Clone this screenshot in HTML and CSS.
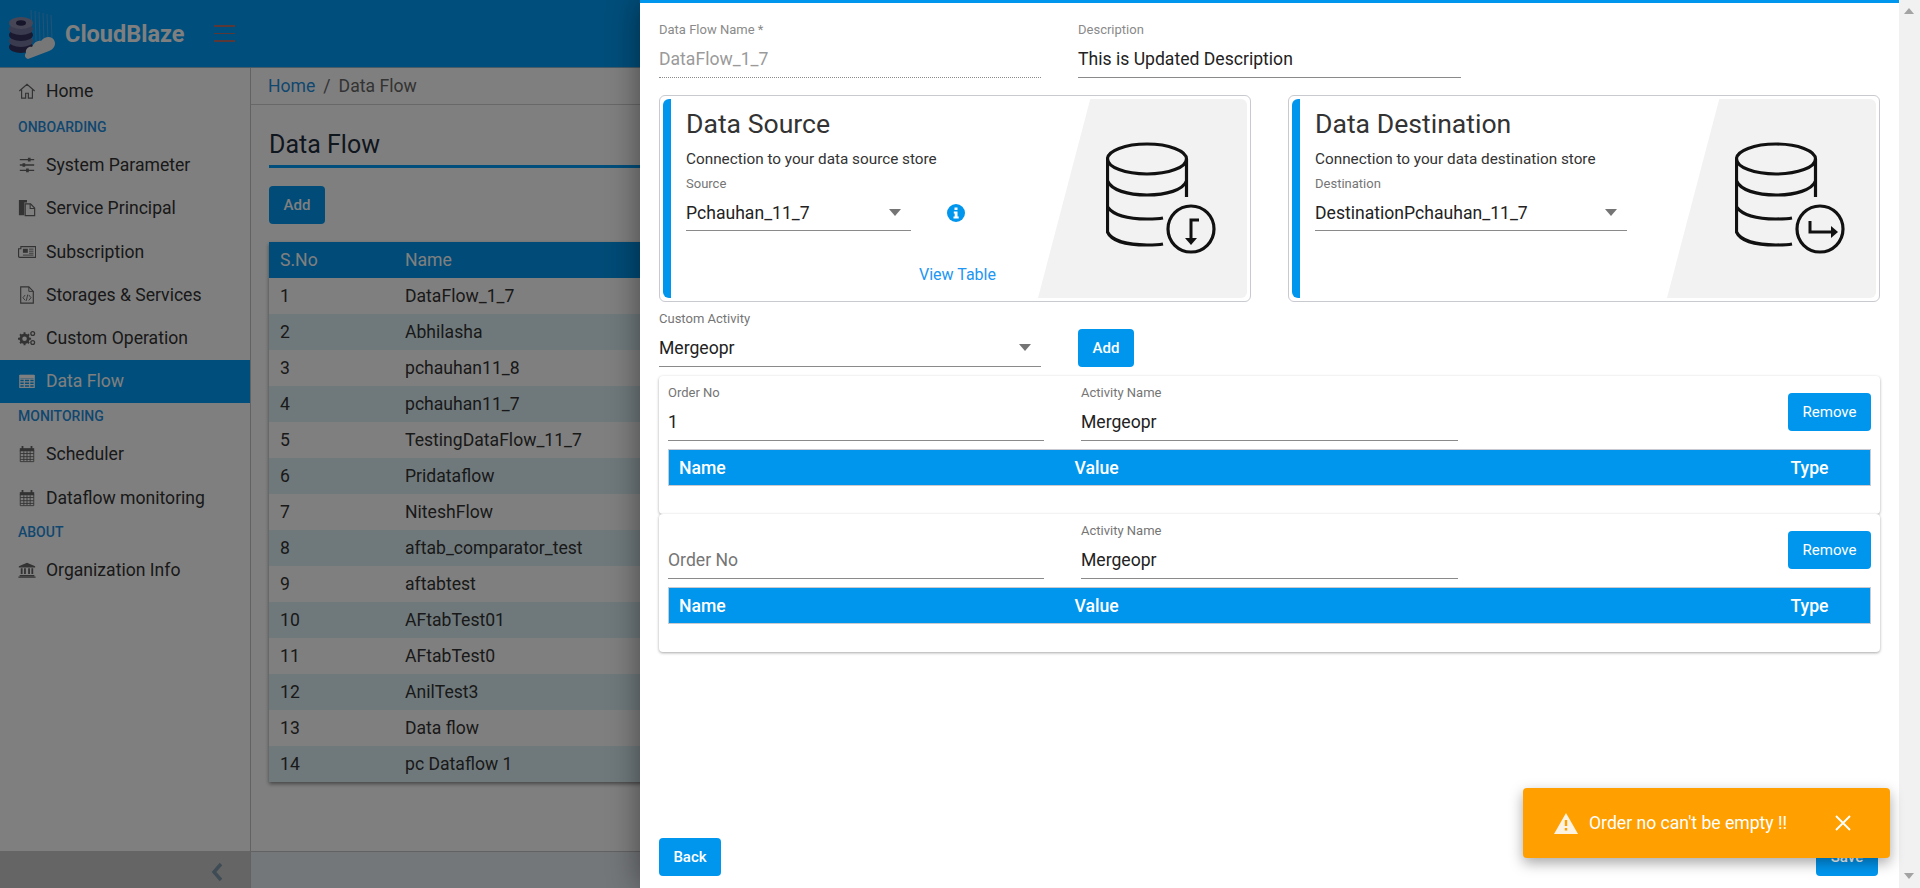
FILE: index.html
```html
<!DOCTYPE html>
<html lang="en">
<head>
  <meta charset="UTF-8" />
  <title>CloudBlaze - Data Flow</title>
  <link rel="stylesheet" href="styles.css">
</head>
<body>

  <svg class="sprite" xmlns="http://www.w3.org/2000/svg">
    <symbol id="db-base" viewBox="0 0 110 113">
      <g fill="none" stroke="#111" stroke-width="3.200">
        <ellipse cx="41" cy="18" rx="39.500" ry="15"/>
        <path d="M1.500 18v73c4 9 20 13 39.500 13 6 0 11 0 16-1"/>
        <path d="M80.500 18v38"/>
        <path d="M1.500 40c4 9 20 14 39.500 14s36-5 39.500-14"/>
        <path d="M1.500 66c6 8 20 12 39.500 12 6 0 11 0 16-1"/>
        <circle cx="85" cy="88" r="23"/>
      </g>
    </symbol>
    <symbol id="i-home" viewBox="0 0 20 20"><path d="M1.500 10 10 2.500l8.500 7.500M4 8.500V18h4.500v-5.500h3V18H16V8.500" fill="none" stroke="currentColor" stroke-width="1.300"/></symbol>
    <symbol id="i-sliders" viewBox="0 0 20 20"><path d="M2 4h16M2 10h16M2 16h16" stroke="currentColor" stroke-width="1.500"/><path d="M11 2h3v4h-3zM5 8h3v4H5zM9 14h3v4H9z" fill="currentColor"/></symbol>
    <symbol id="i-copy" viewBox="0 0 20 20"><path d="M1 1h9v3H7v14H1z" fill="currentColor"/><path d="M8 5.500h6l4.500 4.500v8.500H8z" fill="none" stroke="currentColor" stroke-width="1.300"/><path d="M13.500 5.500V10.500h5" fill="none" stroke="currentColor" stroke-width="1.200"/></symbol>
    <symbol id="i-news" viewBox="0 0 22 20"><path d="M3.500 3.500h18v13H2a1.300 1.300 0 0 1-1.300-1.300V6h2.800z" fill="none" stroke="currentColor" stroke-width="1.400"/><path d="M6 6h6v5H6z" fill="currentColor"/><path d="M13.500 6.500H19M13.500 9H19M13.500 11.500H19M6 13.800h13" stroke="currentColor" stroke-width="1.100"/></symbol>
    <symbol id="i-code" viewBox="0 0 20 20"><path d="M3 1h9l5 5v13H3z" fill="none" stroke="currentColor" stroke-width="1.300"/><path d="M12 1v5h5M8 10l-2.500 3L8 16M12 10l2.500 3-2.500 3M10.800 9.500l-1.600 7" fill="none" stroke="currentColor" stroke-width="1"/></symbol>
    <symbol id="i-cogs" viewBox="0 0 22 20"><circle cx="8" cy="11" r="4.500" fill="none" stroke="currentColor" stroke-width="3.400"/><path d="M8 3v3M8 16v3M0 11h3M13 11h3M2.500 5.500l2 2M11.500 14.500l2 2M2.500 16.500l2-2M11.500 7.500l2-2" stroke="currentColor" stroke-width="2.400"/><circle cx="18" cy="4.500" r="2.300" fill="none" stroke="currentColor" stroke-width="1.600"/><circle cx="18" cy="15.500" r="2.300" fill="none" stroke="currentColor" stroke-width="1.600"/></symbol>
    <symbol id="i-table" viewBox="0 0 20 20"><path d="M2 4h16v13H2zM2 8h16M2 11h16M2 14h16M7 8v9M13 8v9" fill="none" stroke="currentColor" stroke-width="1.300"/><path d="M2 3h16v4H2z" fill="currentColor"/></symbol>
    <symbol id="i-cal" viewBox="0 0 20 20"><path d="M2 3.500h16V7H2z" fill="currentColor"/><path d="M5 1v4M15 1v4" stroke="currentColor" stroke-width="2"/><path d="M2.500 6v12.500h15V6M2.500 9.500h15M2.500 13h15M2.500 16h15M6.500 7v11M10 7v11M13.500 7v11" fill="none" stroke="currentColor" stroke-width="1"/></symbol>
    <symbol id="i-bank" viewBox="0 0 22 20"><path d="M11 1 1 5.500V7h20V5.500zM2 16h18v1.500H2zM0.500 18h21v1.500H.5z" fill="currentColor"/><path d="M4.500 8v7M8.500 8v7M13.500 8v7M17.500 8v7" stroke="currentColor" stroke-width="2.200"/></symbol>
  </svg>

  <div class="page">
    <header class="topbar">
      <svg class="logo" viewBox="0 0 50 52" aria-hidden="true">
        <g stroke="#a7b4dd" stroke-width=".7" opacity=".6"><path d="M23 1l1 30M27 2l1 30M31 3l1 30M35 4l1 28M39 5l1 26M43 6l1 24"/></g>
        <ellipse cx="13" cy="38" rx="12" ry="6" fill="#34325f"/>
        <ellipse cx="13" cy="32" rx="12" ry="6" fill="#77769f"/>
        <ellipse cx="13" cy="26" rx="12" ry="6" fill="#34325f"/>
        <ellipse cx="13" cy="20" rx="12" ry="6" fill="#77769f"/>
        <ellipse cx="13" cy="14" rx="12" ry="6" fill="#8c8cae"/>
        <ellipse cx="13" cy="14" rx="5" ry="2.800" fill="#2c2a55"/>
        <path d="M20 50c-3-1-4-4-2-6-1-4 3-7 6-6 2-5 6-7 9-6 3-4 8-5 11-3 3 2 4 6 2 9-1 2-3 3-5 4z" fill="#efefef"/>
      </svg>
      <span class="brand">CloudBlaze</span>
      <span class="burger"><i></i><i></i><i></i></span>
    </header>

    <div class="shell">
      <aside class="sidebar">
        <nav class="menu">
          <a class="menu-item"><svg><use href="#i-home"/></svg>Home</a>
          <div class="menu-label">ONBOARDING</div>
          <a class="menu-item"><svg><use href="#i-sliders"/></svg>System Parameter</a>
          <a class="menu-item"><svg><use href="#i-copy"/></svg>Service Principal</a>
          <a class="menu-item"><svg><use href="#i-news"/></svg>Subscription</a>
          <a class="menu-item"><svg><use href="#i-code"/></svg>Storages &amp; Services</a>
          <a class="menu-item"><svg><use href="#i-cogs"/></svg>Custom Operation</a>
          <a class="menu-item active"><svg><use href="#i-table"/></svg>Data Flow</a>
          <div class="menu-label">MONITORING</div>
          <a class="menu-item"><svg><use href="#i-cal"/></svg>Scheduler</a>
          <a class="menu-item"><svg><use href="#i-cal"/></svg>Dataflow monitoring</a>
          <div class="menu-label">ABOUT</div>
          <a class="menu-item"><svg><use href="#i-bank"/></svg>Organization Info</a>
        </nav>
        <div class="collapse">
          <svg width="14" height="20" viewBox="0 0 14 20"><path d="M11 2 4 10l7 8" fill="none" stroke="#7f99aa" stroke-width="3.500"/></svg>
        </div>
      </aside>

      <main class="content">
        <div class="crumbs"><a>Home</a><span class="sep">/</span><span>Data Flow</span></div>
        <div class="content-body">
          <h1 class="page-title">Data Flow</h1>
          <button class="btn">Add</button>
          <table class="flow-table">
            <thead><tr><th class="col-no">S.No</th><th>Name</th></tr></thead>
            <tbody>
              <tr><td>1</td><td>DataFlow_1_7</td></tr>
              <tr><td>2</td><td>Abhilasha</td></tr>
              <tr><td>3</td><td>pchauhan11_8</td></tr>
              <tr><td>4</td><td>pchauhan11_7</td></tr>
              <tr><td>5</td><td>TestingDataFlow_11_7</td></tr>
              <tr><td>6</td><td>Pridataflow</td></tr>
              <tr><td>7</td><td>NiteshFlow</td></tr>
              <tr><td>8</td><td>aftab_comparator_test</td></tr>
              <tr><td>9</td><td>aftabtest</td></tr>
              <tr><td>10</td><td>AFtabTest01</td></tr>
              <tr><td>11</td><td>AFtabTest0</td></tr>
              <tr><td>12</td><td>AnilTest3</td></tr>
              <tr><td>13</td><td>Data flow</td></tr>
              <tr><td>14</td><td>pc Dataflow 1</td></tr>
            </tbody>
          </table>
        </div>
        <div class="content-foot"></div>
      </main>
    </div>
  </div>

  <div class="backdrop"></div>

  <section class="drawer">
    <div class="drawer-main">
      <div class="drawer-body">
        <div class="name-row">
          <div class="field w-382">
            <label>Data Flow Name *</label>
            <div class="value disabled">DataFlow_1_7</div>
          </div>
          <div class="field w-383">
            <label>Description</label>
            <div class="value">This is Updated Description</div>
          </div>
        </div>

        <div class="store-row">
          <div class="store">
            <div class="store-body">
              <h2>Data Source</h2>
              <p>Connection to your data source store</p>
              <div class="source-row">
                <div class="field w-225">
                  <label>Source</label>
                  <div class="value select">Pchauhan_11_7</div>
                </div>
                <svg class="info" width="18" height="18" viewBox="0 0 18 18"><circle cx="9" cy="9" r="9" fill="#0096ee"/><path d="M7.500 3.500h3v2.500h-3zM6.800 7.500h3.700v5h1.200v2H6.500v-2h1.200v-3H6.800z" fill="#fff"/></svg>
              </div>
              <a class="view-link">View Table</a>
            </div>
            <div class="store-art">
              <svg class="db" viewBox="0 0 110 113">
                <use href="#db-base"/>
                <path d="M93 79H85V101" fill="none" stroke="#111" stroke-width="3"/>
                <path d="M79 97h12l-6 7z" fill="#111"/>
              </svg>
            </div>
          </div>

          <div class="store">
            <div class="store-body">
              <h2>Data Destination</h2>
              <p>Connection to your data destination store</p>
              <div class="field w-312">
                <label>Destination</label>
                <div class="value select">DestinationPchauhan_11_7</div>
              </div>
            </div>
            <div class="store-art">
              <svg class="db" viewBox="0 0 110 113">
                <use href="#db-base"/>
                <path d="M75 80V91H98" fill="none" stroke="#111" stroke-width="3"/>
                <path d="M96 85l7 6-7 6z" fill="#111"/>
              </svg>
            </div>
          </div>
        </div>

        <div class="custom-row">
          <div class="field w-382">
            <label>Custom Activity</label>
            <div class="value select">Mergeopr</div>
          </div>
          <button class="btn">Add</button>
        </div>

        <div class="activity">
          <div class="activity-top">
            <div class="field w-376">
              <label>Order No</label>
              <div class="value">1</div>
            </div>
            <div class="field w-377">
              <label>Activity Name</label>
              <div class="value">Mergeopr</div>
            </div>
            <button class="btn btn-remove">Remove</button>
          </div>
          <table class="param-table">
            <thead><tr><th class="col-a">Name</th><th class="col-b">Value</th><th>Type</th></tr></thead>
          </table>
        </div>

        <div class="activity">
          <div class="activity-top">
            <div class="field w-376">
              <label>&nbsp;</label>
              <div class="value empty">Order No</div>
            </div>
            <div class="field w-377">
              <label>Activity Name</label>
              <div class="value">Mergeopr</div>
            </div>
            <button class="btn btn-remove">Remove</button>
          </div>
          <table class="param-table">
            <thead><tr><th class="col-a">Name</th><th class="col-b">Value</th><th>Type</th></tr></thead>
          </table>
        </div>
      </div>

      <div class="drawer-foot">
        <button class="btn btn-back">Back</button>
        <button class="btn btn-save">Save</button>
      </div>
    </div>

    <div class="scrollbar"><span class="arrow-up"></span><span class="arrow-down"></span></div>
  </section>

  <div class="toast">
    <svg width="24" height="21" viewBox="0 0 24 21"><path d="M12 0 24 21H0z" fill="#fdf3e3"/><path d="M10.800 7h2.400v6h-2.400zM10.800 15h2.400v2.500h-2.400z" fill="#ffa000"/></svg>
    <span class="toast-text">Order no can't be empty !!</span>
    <svg class="toast-close" width="16" height="16" viewBox="0 0 16 16"><path d="M1 1l14 14M15 1 1 15" stroke="#fff" stroke-width="1.800"/></svg>
  </div>

</body>
</html>
```

FILE: styles.css
```css
* {
  box-sizing: border-box;
}

html, body {
  height: 100%;
}

body {
  margin: 0;
  font-family: Roboto, 'Liberation Sans', sans-serif;
  color: #333;
  overflow: hidden;
  background-color: #fff;
}

.sprite {
  display: none;
}

.page {
  display: flex;
  flex-direction: column;
  height: 888px;
}

.topbar {
  display: flex;
  align-items: center;
  height: 68px;
  padding-left: 8px;
  background-color: #009df7;
  flex-shrink: 0;
  border-bottom: 1px solid #8fb8d0;
}

.logo {
  width: 50px;
  height: 52px;
  margin-top: 2px;
}

.brand {
  margin-left: 7px;
  font-size: 23.5px;
  font-weight: 700;
  color: #fff;
}

.burger {
  display: flex;
  flex-direction: column;
  gap: 6px;
  margin-left: 29px;
}

.burger i {
  display: block;
  width: 21px;
  height: 1.5px;
  background-color: #b5716f;
}

.shell {
  display: flex;
  flex: 1;
  min-height: 0;
}

.sidebar {
  display: flex;
  flex-direction: column;
  width: 250px;
  flex-shrink: 0;
  background-color: #fff;
}

.menu {
  flex: 1;
  padding-top: 1px;
}

.menu-item {
  display: flex;
  align-items: center;
  height: 43.3px;
  padding-left: 18px;
  font-size: 17.6px;
  color: #333;
}

.menu-item:first-child {
  margin-bottom: 1.5px;
}

.menu-item svg {
  width: 18px;
  height: 18px;
  margin-right: 10px;
  color: #666;
  flex-shrink: 0;
}

.menu-item.active {
  background-color: #009df7;
  color: #fff;
}

.menu-item.active svg {
  color: #fff;
}

.menu-label {
  height: 29.5px;
  padding: 5px 0 0 18px;
  font-size: 14px;
  font-weight: 500;
  color: #1f8fdf;
}

.collapse {
  display: flex;
  align-items: center;
  justify-content: flex-end;
  height: 37px;
  padding: 4px 26px 0 0;
  background-color: #cbcbcb;
}

.content {
  display: flex;
  flex-direction: column;
  flex: 1;
  min-width: 0;
  border-left: 1px solid #c4c4c4;
}

.crumbs {
  display: flex;
  align-items: center;
  height: 37px;
  padding-left: 17px;
  font-size: 17.6px;
  color: #666;
  border-bottom: 1px solid #d0d0d0;
}

.crumbs a {
  color: #1f8fdf;
}

.sep {
  margin: 0 8px;
}

.content-body {
  flex: 1;
  padding: 22px 19px 0 18px;
}

.page-title {
  margin: 0;
  height: 41px;
  font-size: 25px;
  line-height: 35px;
  font-weight: 400;
  color: #1f2d3d;
  border-bottom: 3px solid #009df7;
}

.content-body .btn {
  display: block;
  margin: 18px 0 18px;
}

.flow-table {
  width: 100%;
  border-collapse: collapse;
  font-size: 17.6px;
  box-shadow: 0 2px 4px rgba(0, 0, 0, 0.45);
}

.flow-table th {
  height: 36px;
  padding: 0 11px;
  text-align: left;
  font-weight: 400;
  color: #fff;
  background-color: #0096ee;
}

.flow-table .col-no {
  width: 125px;
}

.flow-table td {
  height: 36px;
  padding: 0 11px 1px;
  color: #333;
}

.flow-table tbody tr:nth-child(even) {
  background-color: #dff2f8;
}

.content-foot {
  height: 37px;
  background-color: #e9eef5;
  border-top: 1px solid #c4c4c4;
}

.btn {
  height: 38px;
  min-width: 56px;
  padding: 0 14px;
  font-family: inherit;
  font-size: 15px;
  font-weight: 500;
  color: #fff;
  background-color: #0096ee;
  border: none;
  border-radius: 4px;
}

/* dark layer behind the slide-in panel */
.backdrop {
  position: absolute;
  inset: 0;
  background-color: rgba(0, 0, 0, 0.5);
}

.drawer {
  position: absolute;
  top: 0;
  right: 0;
  bottom: 0;
  display: flex;
  width: 1280px;
  background-color: #fff;
  box-shadow: 0 0 30px rgba(0, 0, 0, 0.45);
}

.drawer-main {
  display: flex;
  flex-direction: column;
  flex: 1;
  min-width: 0;
  padding: 20px 19px 12px 19px;
  border-top: 3px solid #0096ee;
}

.drawer-body {
  flex: 1;
}

.name-row {
  display: flex;
  gap: 37px;
}

.field label {
  display: block;
  height: 14px;
  font-size: 13px;
  line-height: 14px;
  color: #757575;
}

.value {
  display: flex;
  align-items: center;
  height: 41px;
  padding-top: 3px;
  font-size: 17.6px;
  color: #222;
  border-bottom: 1px solid #8a8a8a;
}

.value.disabled {
  color: #9a9a9a;
  border-bottom: 1px dotted #8a8a8a;
}

.name-row label {
  color: #8a8a8a;
}

.value.empty {
  color: #757575;
}

.select {
  justify-content: space-between;
  padding-right: 9px;
}

.select::after {
  content: "";
  margin-right: 1px;
  border-left: 6px solid transparent;
  border-right: 6px solid transparent;
  border-top: 7px solid #757575;
}

.w-225 { width: 225px; }
.w-312 { width: 312px; }
.w-376 { width: 376px; }
.w-377 { width: 377px; }
.w-382 { width: 382px; }
.w-383 { width: 383px; }

.store-row {
  display: flex;
  gap: 37px;
  margin-top: 17px;
}

.store {
  display: flex;
  width: 592px;
  height: 207px;
  padding: 3px;
  border: 1px solid #c9c9d0;
  border-radius: 6px;
}

.store-body {
  flex: 1;
  min-width: 0;
  padding: 9px 0 0 15px;
  border-left: 8px solid #0096ee;
  border-radius: 6px 0 0 6px;
}

.store-body h2 {
  margin: 0;
  font-size: 26.6px;
  line-height: 32px;
  font-weight: 400;
  color: #333;
}

.store-body p {
  margin: 9px 0 8px;
  font-size: 15.3px;
  line-height: 20px;
  color: #333;
}

.store-body .value {
  height: 40px;
  padding-top: 4px;
}

.source-row {
  display: flex;
  align-items: flex-end;
}

.info {
  margin: 0 0 9px 36px;
}

.view-link {
  display: block;
  margin: 34px 0 0 233px;
  font-size: 16px;
  line-height: 20px;
  color: #2196f3;
}

.store-art {
  display: flex;
  align-items: center;
  justify-content: flex-end;
  flex-shrink: 0;
  width: 209px;
  padding: 0 8px 3px 0;
  background-color: #f2f2f2;
  border-radius: 0 6px 6px 0;
  clip-path: polygon(25% 0, 100% 0, 100% 100%, 0 100%);
}

.db {
  width: 110px;
  height: 113px;
  margin-right: 23px;
}

.custom-row {
  display: flex;
  align-items: flex-end;
  gap: 37px;
  margin-top: 10px;
}

.activity {
  height: 138px;
  padding: 10px 9px 0;
  background-color: #fff;
  border-radius: 4px;
  box-shadow: 0 1px 3px rgba(0, 0, 0, 0.35);
}

.custom-row + .activity {
  margin-top: 9px;
}

.activity-top {
  display: flex;
  gap: 37px;
}

.btn-remove {
  margin: 7px 0 0 auto;
  width: 83px;
  padding: 0;
  font-weight: 400;
}

.param-table {
  width: 1203px;
  margin-top: 8px;
  border-collapse: collapse;
  table-layout: fixed;
  border: 1px solid #c9c9d0;
}

.param-table th {
  height: 36px;
  padding: 0 0 0 10px;
  text-align: left;
  font-size: 17.6px;
  font-weight: 500;
  color: #fff;
  background-color: #0096ee;
}

.col-a { width: 396px; }
.col-b { width: 716px; }

.drawer-foot {
  display: flex;
  justify-content: space-between;
  padding-right: 2px;
}

.btn-back {
  width: 62px;
  padding: 0;
}

.btn-save {
  width: 62px;
  padding: 0;
}

.scrollbar {
  position: relative;
  width: 21px;
  flex-shrink: 0;
  background-color: #f1f1f1;
}

.arrow-up, .arrow-down {
  position: absolute;
  left: 5px;
  border-left: 5px solid transparent;
  border-right: 5px solid transparent;
}

.arrow-up {
  top: 8px;
  border-bottom: 6px solid #a3a3a3;
}

.arrow-down {
  bottom: 9px;
  border-top: 6px solid #a3a3a3;
}

.toast {
  position: absolute;
  top: 788px;
  left: 1523px;
  display: flex;
  align-items: center;
  width: 367px;
  height: 70px;
  padding-left: 31px;
  background-color: #ffa000;
  border-radius: 4px;
  box-shadow: 0 5px 14px rgba(0, 0, 0, 0.35);
}

.toast-text {
  margin-left: 11px;
  font-size: 17.6px;
  color: #fff;
}

.toast-close {
  margin-left: 48px;
}
```
